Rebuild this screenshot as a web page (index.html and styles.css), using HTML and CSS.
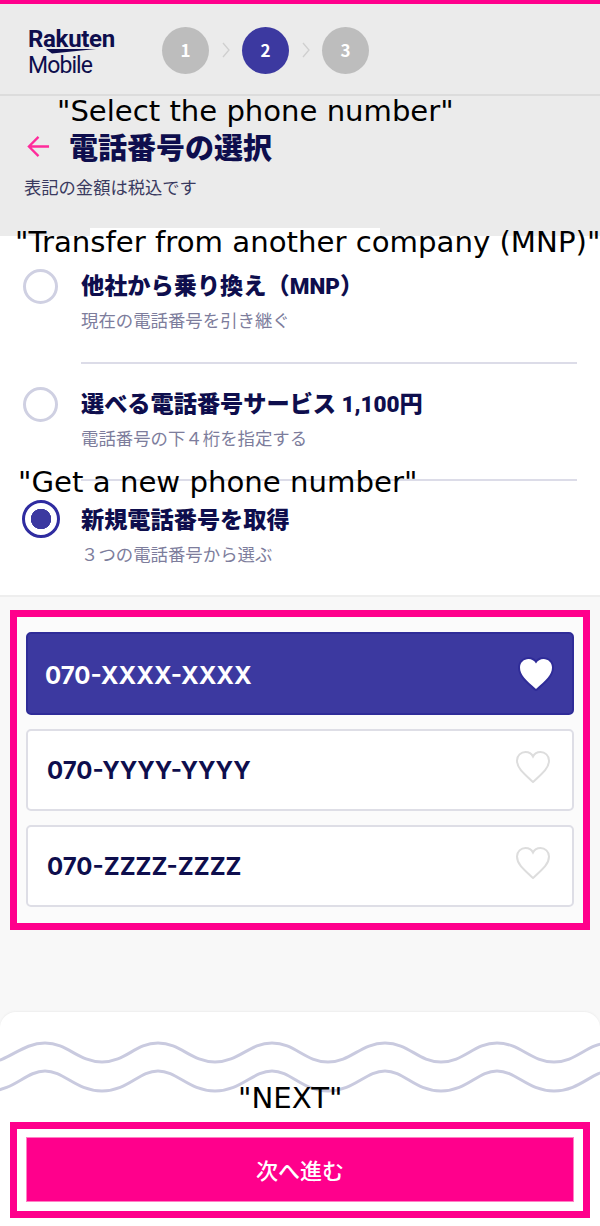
FILE: index.html
```html
<!DOCTYPE html>
<html lang="ja">
<head>
    <meta charset="UTF-8">
    <meta name="viewport" content="width=device-width, initial-scale=1.0">
    <title>電話番号の選択</title>
    <link rel="stylesheet" href="styles.css">
</head>
<body>
    <div class="page">
        <!-- Header -->
        <header class="site-header">
            <div class="logo">
                <span class="logo-main">Rakuten</span>
                <svg class="logo-swoosh" viewBox="0 0 50 5">
                    <path d="M0 0H50L6 4.6Z"/>
                </svg>
                <span class="logo-sub">Mobile</span>
            </div>
            <div class="steps">
                <span class="step">1</span>
                <svg class="step-arrow" viewBox="0 0 8 16"><path d="M1 1l6 7-6 7"/></svg>
                <span class="step step-active">2</span>
                <svg class="step-arrow" viewBox="0 0 8 16"><path d="M1 1l6 7-6 7"/></svg>
                <span class="step">3</span>
            </div>
        </header>

        <!-- Title -->
        <section class="title-block">
            <div class="title-row">
                <svg class="back-icon" viewBox="0 0 24 24">
                    <path d="M23 12H2M12 2L2 12l10 10"/>
                </svg>
                <h1>電話番号の選択</h1>
            </div>
            <p class="tax-note">表記の金額は税込です</p>
        </section>

        <!-- Options -->
        <section class="options">
            <div class="option">
                <span class="radio"></span>
                <div class="option-body">
                    <p class="option-title">他社から乗り換え（<span class="latin">MNP</span>）</p>
                    <p class="option-sub">現在の電話番号を引き継ぐ</p>
                </div>
            </div>
            <div class="option">
                <span class="radio"></span>
                <div class="option-body">
                    <p class="option-title">選べる電話番号サービス <span class="latin">1,100</span>円</p>
                    <p class="option-sub">電話番号の下４桁を指定する</p>
                </div>
            </div>
            <div class="option option-selected">
                <span class="radio"></span>
                <div class="option-body">
                    <p class="option-title">新規電話番号を取得</p>
                    <p class="option-sub">３つの電話番号から選ぶ</p>
                </div>
            </div>
        </section>

        <!-- Numbers -->
        <section class="numbers">
            <div class="pink-box number-box">
                <div class="number-card number-card-active">
                    <span>070-XXXX-XXXX</span>
                    <svg class="heart" viewBox="0 0 36 34"><path d="M18 32C8 23 2 18 2 10.5C2 5.5 6 2 10.5 2C13.5 2 16.5 3.5 18 6.5C19.5 3.5 22.5 2 25.5 2C30 2 34 5.5 34 10.5C34 18 28 23 18 32Z"/></svg>
                </div>
                <div class="number-card">
                    <span>070-YYYY-YYYY</span>
                    <svg class="heart" viewBox="0 0 36 34"><path d="M18 32C8 23 2 18 2 10.5C2 5.5 6 2 10.5 2C13.5 2 16.5 3.5 18 6.5C19.5 3.5 22.5 2 25.5 2C30 2 34 5.5 34 10.5C34 18 28 23 18 32Z"/></svg>
                </div>
                <div class="number-card">
                    <span>070-ZZZZ-ZZZZ</span>
                    <svg class="heart" viewBox="0 0 36 34"><path d="M18 32C8 23 2 18 2 10.5C2 5.5 6 2 10.5 2C13.5 2 16.5 3.5 18 6.5C19.5 3.5 22.5 2 25.5 2C30 2 34 5.5 34 10.5C34 18 28 23 18 32Z"/></svg>
                </div>
            </div>
        </section>

        <!-- Footer -->
        <footer class="bottom-sheet">
            <svg class="waves" viewBox="0 0 600 54">
                <path d="M-11 22C8 22 22 3 45 3S78 22 102 22S135 3 158 3S191 22 215 22S249 3 272 3S305 22 328 22S361 3 385 3S418 22 441 22S474 3 497 3S531 22 554 22S587 3 610 3"/>
                <path d="M-11 51C14 51 26 31 45 31S76 51 102 51S139 31 158 31S189 51 215 51S253 31 272 31S302 51 328 51S366 31 385 31S415 51 441 51S478 31 497 31S528 51 554 51S592 31 610 31"/>
            </svg>
            <div class="pink-box next-box">
                <button type="button" class="next-btn">次へ進む</button>
            </div>
        </footer>

        <!-- Captions over the screenshot -->
        <p class="caption caption-select">"Select the phone number"</p>
        <p class="caption caption-transfer">"Transfer from another company (MNP)"</p>
        <p class="caption caption-new">"Get a new phone number"</p>
        <p class="caption caption-next">"NEXT"</p>
    </div>
</body>
</html>
```

FILE: styles.css
```css
* {
    box-sizing: border-box;
}

body {
    margin: 0;
    background-color: white;
    font-family: "Noto Sans CJK JP", "Noto Sans", sans-serif;
    color: #0e0e4d;
}

p,
h1 {
    margin: 0;
}

.page {
    position: relative;
    width: 600px;
    height: 1226px;
    overflow: hidden;
    background-color: #f8f8f8;
}

/* Header */
.site-header {
    display: flex;
    align-items: center;
    gap: 47px;
    height: 96px;
    padding-left: 28px;
    background-color: #ebebeb;
    border-top: 4px solid #ff008c;
    border-bottom: 2px solid #dcdcdc;
}

.logo {
    display: flex;
    flex-direction: column;
    width: 87px;
    padding-top: 6px;
    font-family: "Roboto", sans-serif;
    line-height: 1;
}

.logo-main {
    font-size: 24px;
    font-weight: 700;
    height: 22px;
    letter-spacing: -0.3px;
}

.logo-swoosh {
    width: 50px;
    height: 5px;
    margin-left: 18px;
    fill: #0e0e4d;
}

.logo-sub {
    font-size: 23px;
    height: 24px;
    letter-spacing: -0.9px;
}

.steps {
    display: flex;
    align-items: center;
    gap: 12.5px;
    padding-top: 2px;
}

.step {
    display: flex;
    justify-content: center;
    align-items: center;
    width: 47px;
    height: 47px;
    padding-bottom: 1px;
    border-radius: 50%;
    background-color: #bdbdbd;
    color: white;
    font-size: 17px;
    font-weight: 700;
}

.step-active {
    background-color: #3c39a0;
}

.step-arrow {
    width: 8px;
    height: 16px;
    fill: none;
    stroke: #cfcfcf;
    stroke-width: 1.3;
}

/* Title */
.title-block {
    position: relative;
    height: 140px;
    padding: 29px 24px 0;
    background-color: #ebebeb;
}

.title-block::after {
    content: "";
    position: absolute;
    left: 90px;
    bottom: 0;
    width: 290px;
    height: 8px;
    background-color: white;
}

.title-row {
    display: flex;
    align-items: center;
    gap: 19px;
    height: 42px;
    padding-left: 3px;
}

.back-icon {
    width: 23px;
    height: 23px;
    fill: none;
    stroke: #ff2b9b;
    stroke-width: 2.4;
}

.title-row h1 {
    font-size: 29px;
    font-weight: 900;
    line-height: 42px;
}

.tax-note {
    margin-top: 7px;
    font-size: 17.3px;
    line-height: 26px;
    color: #3a3a60;
}

/* Options */
.options {
    height: 361px;
    padding-top: 32px;
    background-color: white;
    border-bottom: 2px solid #eeeeee;
}

.option {
    display: flex;
    gap: 23px;
    height: 118px;
    padding-left: 23px;
}

.radio {
    flex: none;
    width: 35px;
    height: 35px;
    margin-top: 1px;
    border: 3px solid #cfd0e2;
    border-radius: 50%;
}

.option-body {
    flex: 1;
    height: 95px;
    margin-right: 23px;
    border-bottom: 2px solid #dcdce8;
}

.option:first-child .option-body {
    height: 96px;
}

.option-selected .option-body {
    border-bottom: none;
}

.option-title {
    font-size: 23.2px;
    font-weight: 900;
    line-height: 32px;
}

.latin {
    font-family: "Roboto", sans-serif;
    font-size: 22.5px;
}

.option-sub {
    margin-top: 5px;
    font-size: 17.4px;
    line-height: 26px;
    color: #7d7d9c;
}

.option-selected {
    padding-left: 22px;
    margin-top: -2px;
}

.option-selected .radio {
    width: 38px;
    height: 38px;
    margin-top: -2px;
    border-color: #2f2ca0;
    background: radial-gradient(circle, #3c39a0 0 10px, white 10.5px);
}

.option-selected .option-body {
    margin-left: -2px;
}

.option-selected .option-sub {
    margin-top: 7px;
}

/* Numbers */
.numbers {
    height: 415px;
    padding: 13px 10px 0;
}

.pink-box {
    border: 7px solid #ff008c;
}

.number-box {
    display: flex;
    flex-direction: column;
    gap: 14px;
    height: 320px;
    padding: 15px 9px;
    background-color: #fbfbfb;
}

.number-card {
    display: flex;
    justify-content: space-between;
    align-items: center;
    height: 82px;
    padding: 0 21px 0 19px;
    background-color: white;
    border: 2px solid #dedee6;
    border-radius: 5px;
    font-family: "Inter", sans-serif;
    font-size: 24px;
    font-weight: 700;
}

.number-card-active {
    height: 83px;
    padding: 0 18px 0 17px;
    background-color: #3c39a0;
    border-color: #2f2c98;
    color: white;
}

.number-card-active span {
    padding-top: 3px;
}

.heart {
    width: 36px;
    height: 34px;
    margin-top: -6px;
    fill: none;
    stroke: #dddddd;
    stroke-width: 2;
}

.number-card-active .heart {
    margin-top: 0;
    fill: white;
    stroke: #2f2c98;
    stroke-width: 4;
    paint-order: stroke;
}

/* Footer */
.bottom-sheet {
    position: relative;
    height: 214px;
    padding: 110px 10px 0;
    background-color: white;
    border-radius: 16px 16px 0 0;
    box-shadow: 0 -1px 2px #eeeeee;
}

.waves {
    position: absolute;
    left: 0;
    top: 28px;
    width: 600px;
    height: 54px;
    fill: none;
    stroke: #c9cadf;
    stroke-width: 3;
}

.next-box {
    height: 96px;
    padding: 8px 9px;
    background-color: white;
}

.next-btn {
    display: block;
    width: 100%;
    height: 65px;
    padding-bottom: 3px;
    background-color: #ff008c;
    border: 1px solid #ff80c5;
    color: white;
    font-family: inherit;
    font-size: 22px;
    font-weight: 500;
}

/* Captions */
.caption {
    position: absolute;
    font-family: "DejaVu Sans", sans-serif;
    font-size: 29.2px;
    line-height: 36px;
    white-space: nowrap;
    color: black;
}

.caption-select {
    left: 57px;
    top: 93px;
    font-size: 29.1px;
}

.caption-transfer {
    left: 15px;
    top: 224px;
}

.caption-new {
    left: 18px;
    top: 464px;
}

.caption-next {
    left: 238px;
    top: 1080px;
}
```
